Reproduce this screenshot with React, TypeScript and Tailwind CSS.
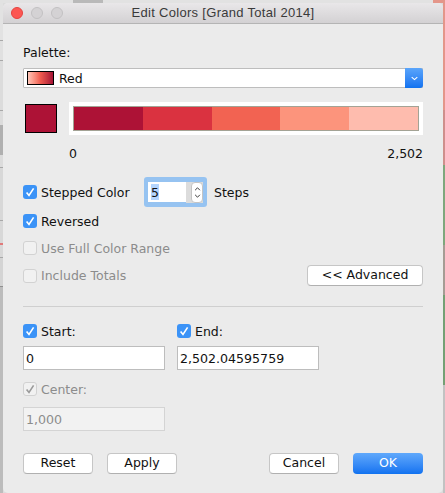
import React from "react";

const font = "[font-family:'DejaVu_Sans',sans-serif]";

function Check({ state }: { state: "on" | "off" | "dim" }) {
  if (state === "off") return <span className="block w-[14px] h-[14px] shrink-0 rounded-[3px] border border-[#d2d2d2] bg-[#f1f1f1]" />;
  const on = state === "on";
  return (
    <span className={`flex items-center justify-center w-[14px] h-[14px] shrink-0 rounded-[3px] ${on ? "bg-[#3b93f7]" : "border border-[#d2d2d2] bg-[#f1f1f1]"}`}>
      <svg viewBox="0 0 14 14" className="w-[14px] h-[14px] shrink-0" fill="none" stroke={on ? "#ffffff" : "#9a9a9a"} strokeWidth="1.6">
        <path d="M3.6 7.4 L6 10.4 L10.6 3.4" />
      </svg>
    </span>
  );
}

function Btn({ label, className }: { label: string; className: string }) {
  return (
    <div className={`flex items-center justify-center h-[21px] rounded-[4px] bg-white border border-[#c6c6c6] border-b-[#b0b0b0] text-[12.5px] text-[#111] ${className}`}>{label}</div>
  );
}

function Field({ value, dim }: { value: string; dim?: boolean }) {
  return (
    <div className={`flex items-center w-[142px] h-[24px] pl-[2px] pt-[2px] border text-[12.6px] ${dim ? "bg-[#f2f2f2] border-[#d4d4d4] text-[#8c8c8c]" : "bg-white border-[#bdbdbd] text-[#111]"}`}>{value}</div>
  );
}

function Label({ text, className = "" }: { text: string; className?: string }) {
  return <span className={`ml-[4px] pt-[2px] ${className}`}>{text}</span>;
}

const steps = ["bg-[#ad1236]", "bg-[#da3240]", "bg-[#f26352]", "bg-[#fc947c]", "bg-[#febcae]"];

const rightStrip = [
  { h: "h-[110px]", c: "bg-[#e4968a]" },
  { h: "h-[55px]", c: "bg-[#cf8f8c]" },
  { h: "h-[80px]", c: "bg-[#7ea77c]" },
  { h: "h-[50px]", c: "bg-[#a59c94]" },
  { h: "h-[90px]", c: "bg-[#74a074]" },
  { h: "h-[108px]", c: "bg-[#c2c2c2]" },
];

const leftStrip = [
  { h: "h-[40px]", c: "bg-[#e2e2e2]" },
  { h: "h-px", c: "bg-[#a8a8a8]" },
  { h: "h-[19px]", c: "bg-[#e0e0e0]" },
  { h: "h-px", c: "bg-[#a8a8a8]" },
  { h: "h-[49px]", c: "bg-[#dcdcdc]" },
  { h: "h-px", c: "bg-[#a8a8a8]" },
  { h: "h-[14px]", c: "bg-[#dcdcdc]" },
  { h: "h-[30px]", c: "bg-[#b0b0b0]" },
  { h: "h-[12px]", c: "bg-[#dcdcdc]" },
  { h: "h-px", c: "bg-[#a8a8a8]" },
  { h: "h-[52px]", c: "bg-[#d8d8d8]" },
  { h: "h-px", c: "bg-[#a8a8a8]" },
  { h: "h-[22px]", c: "bg-[#d8d8d8]" },
  { h: "h-[2px]", c: "bg-[#e07a7a]" },
  { h: "h-[12px]", c: "bg-[#d8d8d8]" },
  { h: "h-px", c: "bg-[#a8a8a8]" },
  { h: "h-[28px]", c: "bg-[#d4d4d4]" },
  { h: "h-px", c: "bg-[#909090]" },
  { h: "h-[206px]", c: "bg-[#bcbcbc]" },
];

export default function App() {
  return (
    <div className={`flex w-[445px] h-[493px] overflow-hidden bg-[#dcdcdc] ${font}`}>
      <div className="flex flex-col w-[3px] shrink-0">
        {leftStrip.map((s, i) => <div key={i} className={`shrink-0 ${s.h} ${s.c}`} />)}
      </div>
      <div className="flex flex-col w-[440px] shrink-0">
        <div className="flex h-[3px] shrink-0 bg-[#e2e2e2]">
          <div className="w-[70px]" />
          <div className="w-[30px] bg-[#b9b9b9]" />
          <div className="flex-1" />
          <div className="w-[10px] bg-[#e4968a]" />
        </div>
        <div className="flex flex-col h-[490px] rounded-[5px] overflow-hidden bg-[#ebebeb]">
          <div className="relative flex items-center justify-center h-[21px] shrink-0 bg-gradient-to-b from-[#e9e7e9] to-[#d3d1d3] border-b border-[#b4b4b4]">
            <div className="absolute left-[8px] top-[4px] flex gap-[8px]">
              <span className="block w-[12px] h-[12px] rounded-full bg-[#fc5753] border border-[#e5433f]" />
              <span className="block w-[12px] h-[12px] rounded-full bg-[#d4d2d4] border border-[#c2c0c2]" />
              <span className="block w-[12px] h-[12px] rounded-full bg-[#d4d2d4] border border-[#c2c0c2]" />
            </div>
            <span className="text-[13px] text-[#3a3a3a] tracking-[0.3px] [font-family:'Liberation_Sans',sans-serif]">Edit Colors [Grand Total 2014]</span>
          </div>

          <div className="flex flex-col pl-[20px] w-[420px] text-[12.5px] text-[#111]">
            <div className="mt-[21px] h-[16px] leading-[16px]">Palette:</div>
            <div className="flex items-center mt-[7px] h-[20px] w-[400px] bg-white border border-[#bdbdbd] rounded-l-[1px] relative">
              <span className="block ml-[3px] w-[27px] h-[14px] border border-black bg-gradient-to-r from-[#fdc4b6] via-[#ef5a4e] to-[#a50f35]" />
              <span className="ml-[5px] pt-[2px]">Red</span>
              <span className="absolute right-[-1px] top-[-1px] flex items-center justify-center w-[18px] h-[20px] rounded-r-[3px] bg-gradient-to-b from-[#5aa5fb] to-[#0f72f0]">
                <svg viewBox="0 0 10 6" className="w-[7px] h-[5px]" fill="none" stroke="#fff" strokeWidth="1.6"><path d="M1 1 L5 4.6 L9 1" /></svg>
              </span>
            </div>

            <div className="flex items-center mt-[14px] h-[33px]">
              <span className="block ml-[2px] w-[32px] h-[29px] border border-black bg-[#ad1236]" />
              <div className="ml-[12px] flex items-center w-[354px] h-[33px] px-[4px] bg-white">
                <div className="flex w-full h-[25px] border border-[#a3a395]">
                  {steps.map((s) => <div key={s} className={`flex-1 ${s}`} />)}
                </div>
              </div>
            </div>

            <div className="flex justify-between mt-[11px] w-[400px] pl-[46px] h-[16px] leading-[16px]">
              <span>0</span><span>2,502</span>
            </div>

            <div className="flex items-center mt-[15px] h-[30px]">
              <Check state="on" />
              <Label text="Stepped Color" className="w-[103px] shrink-0" />
              <div className="flex items-center w-[63px] h-[30px] rounded-[3px] bg-[#96c3f1] pl-[4px]">
                <div className="flex items-center w-[38px] h-[20px] bg-white pl-[3px]"><span className="block h-[16px] leading-[17px] bg-[#b4d5fe]">5</span></div>
                <div className="flex items-center justify-end w-[17px] h-[21px] bg-[#dcdcdc]">
                  <div className="flex flex-col items-center justify-center gap-[3px] w-[12px] h-[21px] rounded-[4px] bg-white border border-[#c4c4c4]">
                    <svg viewBox="0 0 8 5" className="w-[7px] h-[4px]" fill="none" stroke="#333" strokeWidth="1.2"><path d="M1 4 L4 1 L7 4" /></svg>
                    <svg viewBox="0 0 8 5" className="w-[7px] h-[4px]" fill="none" stroke="#333" strokeWidth="1.2"><path d="M1 1 L4 4 L7 1" /></svg>
                  </div>
                </div>
              </div>
              <Label text="Steps" className="ml-[7px]" />
            </div>

            <div className="flex items-center mt-[7px] h-[14px]">
              <Check state="on" /><Label text="Reversed" />
            </div>
            <div className="flex items-center mt-[13px] h-[14px] text-[#8c8c8c]">
              <Check state="off" /><Label text="Use Full Color Range" />
            </div>
            <div className="flex items-center justify-between mt-[10px] h-[21px] w-[400px] text-[#8c8c8c]">
              <div className="flex items-center"><Check state="off" /><Label text="Include Totals" /></div>
              <Btn label="<< Advanced" className="w-[116px]" />
            </div>

            <div className="mt-[20px] w-[400px] h-px bg-[#cfcfcf]" />

            <div className="flex gap-[12px] mt-[17px]">
              <div className="flex flex-col w-[142px]">
                <div className="flex items-center h-[14px]"><Check state="on" /><Label text="Start:" /></div>
                <div className="mt-[8px]"><Field value="0" /></div>
              </div>
              <div className="flex flex-col w-[142px]">
                <div className="flex items-center h-[14px]"><Check state="on" /><Label text="End:" /></div>
                <div className="mt-[8px]"><Field value="2,502.04595759" /></div>
              </div>
            </div>

            <div className="flex items-center mt-[12px] h-[14px] text-[#8c8c8c]">
              <Check state="dim" /><Label text="Center:" />
            </div>
            <div className="mt-[11px]"><Field value="1,000" dim /></div>

            <div className="flex items-center mt-[22px] w-[400px] h-[21px]">
              <Btn label="Reset" className="w-[70px]" />
              <Btn label="Apply" className="w-[70px] ml-[14px]" />
              <Btn label="Cancel" className="w-[70px] ml-auto" />
              <div className="flex items-center justify-center w-[70px] h-[21px] ml-[14px] rounded-[4px] bg-gradient-to-b from-[#5fa8fb] to-[#0f72f0] text-white">OK</div>
            </div>
          </div>
        </div>
      </div>
      <div className="flex flex-col w-[2px] shrink-0">
        {rightStrip.map((s, i) => <div key={i} className={`shrink-0 ${s.h} ${s.c}`} />)}
      </div>
    </div>
  );
}
